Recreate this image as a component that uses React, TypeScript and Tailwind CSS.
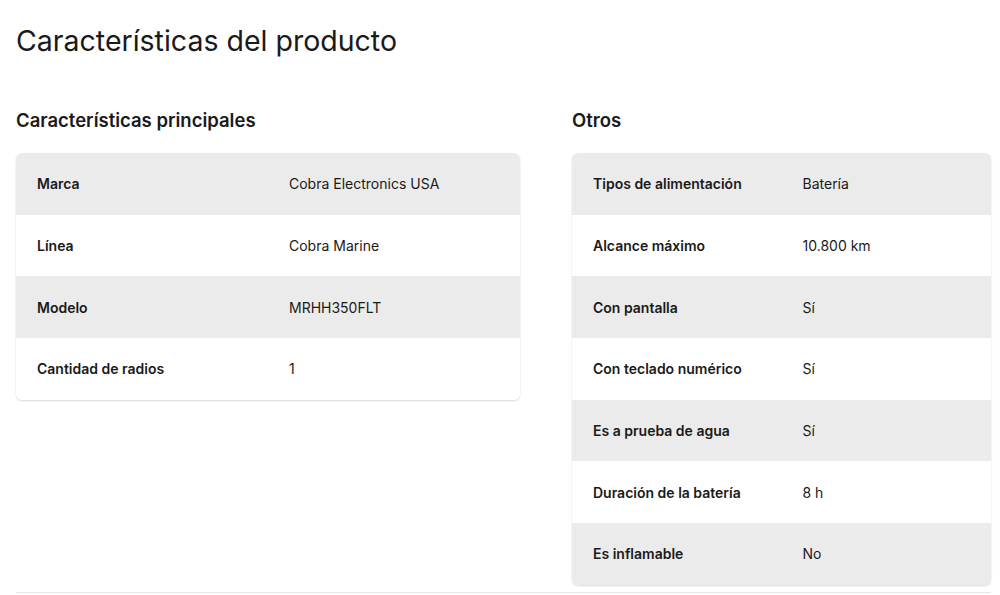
const main: [string, string][] = [
  ["Marca", "Cobra Electronics USA"],
  ["Línea", "Cobra Marine"],
  ["Modelo", "MRHH350FLT"],
  ["Cantidad de radios", "1"],
];

const others: [string, string][] = [
  ["Tipos de alimentación", "Batería"],
  ["Alcance máximo", "10.800 km"],
  ["Con pantalla", "Sí"],
  ["Con teclado numérico", "Sí"],
  ["Es a prueba de agua", "Sí"],
  ["Duración de la batería", "8 h"],
  ["Es inflamable", "No"],
];

function SpecTable({ title, rows, width }: { title: string; rows: [string, string][]; width: string }) {
  return (
    <div className={width + " shrink-0"}>
      <h3 className="text-[18.5px] font-semibold leading-[24px] text-[#1a1a1a] h-[24px]">{title}</h3>
      <div className="mt-[21px] rounded-[6px] overflow-hidden shadow-[0_1px_2px_rgba(0,0,0,0.15)]">
        {rows.map(([k, v], i) => (
          <div
            key={k}
            className={"grid grid-cols-2 h-[61.7px] items-center text-[14px] text-[#1a1a1a] " + (i % 2 === 0 ? "bg-[#ebebeb]" : "bg-white")}
          >
            <span className="px-[21px] font-semibold">{k}</span>
            <span className="px-[21px]">{v}</span>
          </div>
        ))}
      </div>
    </div>
  );
}

export default function App() {
  return (
    <div className="w-[1000px] h-[595px] bg-white font-['Inter',sans-serif] overflow-hidden">
      <div className="pl-4 pr-[9px] pt-[24px]">
        <h2 className="text-[28.5px] font-normal leading-[34px] text-[#1a1a1a]">Características del producto</h2>
        <div className="mt-[50px] flex gap-[52px]">
          <SpecTable title="Características principales" rows={main} width="w-[504px]" />
          <SpecTable title="Otros" rows={others} width="w-[419px]" />
        </div>
        <div className="mt-[7px] border-b border-[#e6e6e6]" />
      </div>
    </div>
  );
}
